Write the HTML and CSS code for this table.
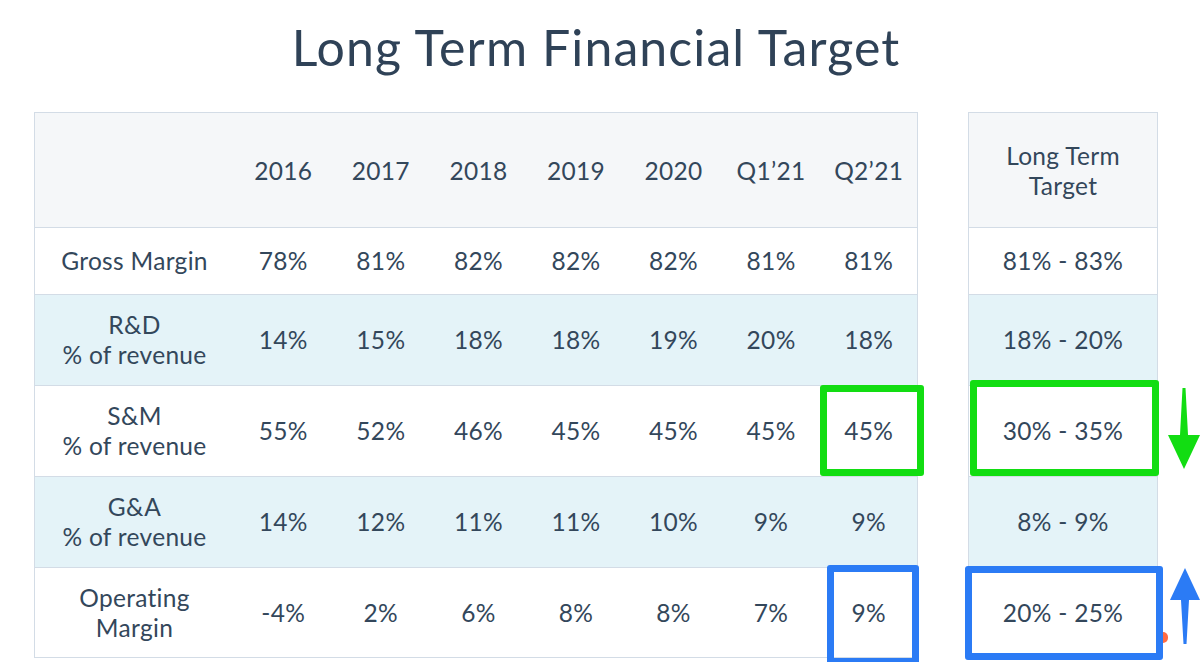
FILE: index.html
```html
<!DOCTYPE html>
<html>
<head>
<meta charset="utf-8">
<link rel="stylesheet" href="styles.css">
</head>
<body>
<h1 class="title">Long Term Financial Target</h1>
<div class="stage">
  <table class="grid main">
    <colgroup><col class="c-label"><col><col><col><col><col><col><col></colgroup>
    <tr class="r-head"><th></th><th>2016</th><th>2017</th><th>2018</th><th>2019</th><th>2020</th><th>Q1’21</th><th>Q2’21</th></tr>
    <tr class="r-short"><td>Gross Margin</td><td>78%</td><td>81%</td><td>82%</td><td>82%</td><td>82%</td><td>81%</td><td>81%</td></tr>
    <tr class="r-tall alt"><td>R&amp;D<br>% of revenue</td><td>14%</td><td>15%</td><td>18%</td><td>18%</td><td>19%</td><td>20%</td><td>18%</td></tr>
    <tr class="r-tall"><td>S&amp;M<br>% of revenue</td><td>55%</td><td>52%</td><td>46%</td><td>45%</td><td>45%</td><td>45%</td><td>45%</td></tr>
    <tr class="r-tall alt"><td>G&amp;A<br>% of revenue</td><td>14%</td><td>12%</td><td>11%</td><td>11%</td><td>10%</td><td>9%</td><td>9%</td></tr>
    <tr class="r-last"><td>Operating<br>Margin</td><td>-4%</td><td>2%</td><td>6%</td><td>8%</td><td>8%</td><td>7%</td><td>9%</td></tr>
  </table>
  <table class="grid target">
    <tr class="r-head"><th>Long Term<br>Target</th></tr>
    <tr class="r-short"><td>81% - 83%</td></tr>
    <tr class="r-tall alt"><td>18% - 20%</td></tr>
    <tr class="r-tall"><td>30% - 35%</td></tr>
    <tr class="r-tall alt"><td>8% - 9%</td></tr>
    <tr class="r-last"><td>20% - 25%</td></tr>
  </table>

  <div class="mark green m1"></div>
  <div class="mark green m2"></div>
  <div class="mark blue m3"></div>
  <div class="mark blue m4"></div>
  <span class="dot"></span>

  <svg class="arrow a-down" width="34" height="86" viewBox="0 0 34 86">
    <path d="M16.5 2 L19.5 2 L22 49 L34 49 L18 83 L2 49 L14 49 Z" fill="#12dd12"/>
  </svg>
  <svg class="arrow a-up" width="34" height="78" viewBox="0 0 34 78">
    <path d="M19 0 L34 32 L23 32 L20.5 76 L17.5 76 L15 32 L4 32 Z" fill="#2b7bf5"/>
  </svg>
</div>
</body>
</html>
```

FILE: styles.css
```css
html, body {
  margin: 0;
  padding: 0;
  background: #ffffff;
  overflow: hidden;
}

body {
  font-family: Lato, "Noto Sans", "Liberation Sans", sans-serif;
  color: #33475b;
  width: 1200px;
  height: 662px;
}

.title {
  margin: 0;
  padding-top: 18px;
  height: 58px;
  line-height: 58px;
  font-size: 50px;
  font-weight: 400;
  letter-spacing: 1.1px;
  text-align: center;
  color: #2f4257;
  padding-right: 8px;
  margin-bottom: 36px;
}

.stage {
  position: relative;
  display: flex;
  align-items: flex-start;
  gap: 50px;
  padding-left: 34px;
}

.grid {
  border-collapse: collapse;
  table-layout: fixed;
  font-size: 24.5px;
  letter-spacing: 0.3px;
  line-height: 30px;
}

.grid th,
.grid td {
  border: 1.5px solid #d3dce6;
  text-align: center;
  vertical-align: middle;
  padding: 0;
  font-weight: 400;
}

.main {
  width: 884px;
}

.main th + th,
.main td + td {
  border-left-color: transparent;
  border-right-color: transparent;
}

.main th:last-child,
.main td:last-child {
  border-right-color: #d3dce6;
}

.main th:first-child,
.main td:first-child {
  border-right-color: transparent;
}

.c-label {
  width: 200px;
}

.target {
  width: 190px;
}

.r-head th {
  background: #f5f7f9;
  height: 112px;
  padding-top: 2px;
}

.r-short td {
  height: 66px;
}

.r-tall td {
  height: 90px;
}

.r-last td {
  height: 89px;
}

.alt td {
  background: #e4f3f8;
}

.mark {
  position: absolute;
  box-sizing: border-box;
  border-width: 7px;
  border-style: solid;
  border-radius: 3px;
}

.green {
  border-color: #12dd12;
}

.blue {
  border-color: #2b7bf5;
}

.m1 { left: 820px; top: 273px; width: 104px; height: 91px; }
.m2 { left: 970px; top: 268px; width: 189px; height: 96px; }
.m3 { left: 827px; top: 453px; width: 92px; height: 100px; }
.m4 { left: 965px; top: 454px; width: 198px; height: 94px; }

.dot {
  position: absolute;
  left: 1163px;
  top: 520px;
  width: 5px;
  height: 11px;
  background: #ff6b42;
  border-radius: 0 6px 6px 0;
}

.arrow {
  position: absolute;
  display: block;
}

.a-down { left: 1166px; top: 274px; }
.a-up { left: 1166px; top: 456px; }
```
